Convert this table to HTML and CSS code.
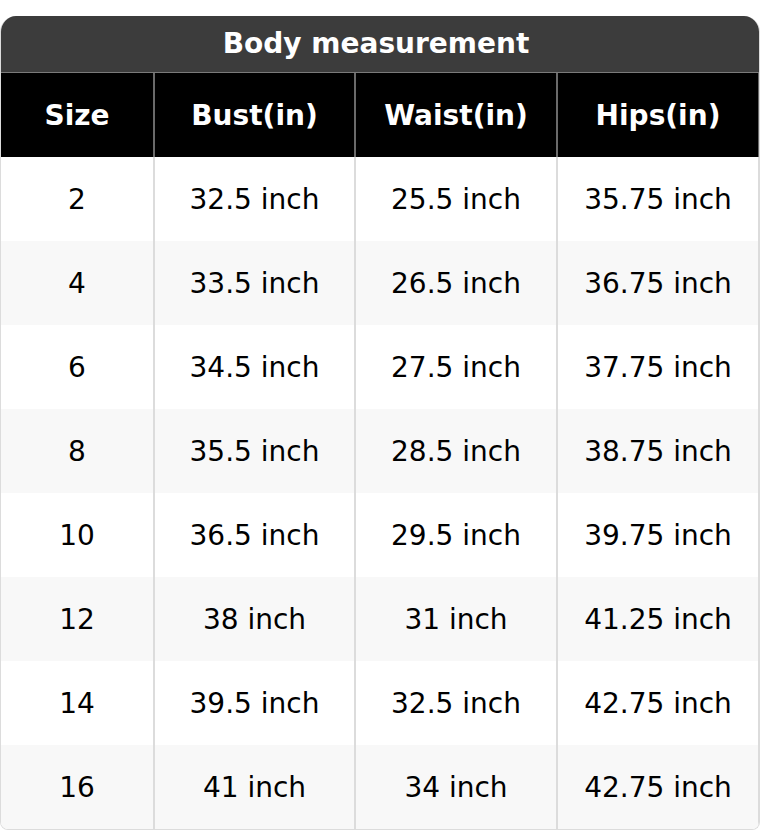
FILE: index.html
```html
<!DOCTYPE html>
<html>
<head>
<meta charset="utf-8">
<link rel="stylesheet" href="styles.css">
</head>
<body>
<div class="card">
  <div class="title">Body measurement</div>
  <table class="chart">
    <colgroup>
      <col class="c1"><col class="c2"><col class="c3"><col class="c4">
    </colgroup>
    <thead>
      <tr><th>Size</th><th>Bust(in)</th><th>Waist(in)</th><th>Hips(in)</th></tr>
    </thead>
    <tbody>
      <tr><td>2</td><td>32.5 inch</td><td>25.5 inch</td><td>35.75 inch</td></tr>
      <tr><td>4</td><td>33.5 inch</td><td>26.5 inch</td><td>36.75 inch</td></tr>
      <tr><td>6</td><td>34.5 inch</td><td>27.5 inch</td><td>37.75 inch</td></tr>
      <tr><td>8</td><td>35.5 inch</td><td>28.5 inch</td><td>38.75 inch</td></tr>
      <tr><td>10</td><td>36.5 inch</td><td>29.5 inch</td><td>39.75 inch</td></tr>
      <tr><td>12</td><td>38 inch</td><td>31 inch</td><td>41.25 inch</td></tr>
      <tr><td>14</td><td>39.5 inch</td><td>32.5 inch</td><td>42.75 inch</td></tr>
      <tr><td>16</td><td>41 inch</td><td>34 inch</td><td>42.75 inch</td></tr>
    </tbody>
  </table>
</div>
</body>
</html>
```
FILE: styles.css
```css
html, body {
  margin: 0;
  padding: 0;
  background: #ffffff;
}
body {
  padding-top: 16px;
  font-family: "DejaVu Sans", "Liberation Sans", sans-serif;
  font-size: 28px;
  color: #000;
}
.card {
  width: 760px;
  box-sizing: border-box;
  border: 1px solid #dcdcdc;
  border-top: none;
  border-radius: 16px 16px 8px 8px;
  overflow: hidden;
  background: #fff;
}
.title {
  height: 56px;
  background: #3c3c3c;
  color: #fff;
  font-weight: bold;
  text-align: center;
  line-height: 56px;
  border-bottom: 1px solid #7a7a7a;
  margin: 0 -1px;
  padding-right: 8px;
}
.chart {
  width: 758px;
  table-layout: fixed;
  border-collapse: separate;
  border-spacing: 0;
}
.c1 { width: 154px; }
.c2 { width: 201px; }
.c3 { width: 202px; }
.c4 { width: 201px; }
.chart th,
.chart td {
  padding: 0;
  text-align: center;
  border-right: 2px solid #dcdcdc;
}
.chart th:last-child,
.chart td:last-child {
  border-right: 1px solid #dcdcdc;
}
.chart th {
  height: 84px;
  background: #000;
  color: #fff;
  font-weight: bold;
  border-right-color: #6a6a6a;
}
.chart th:last-child {
  border-right-color: #6a6a6a;
}
.chart td {
  height: 84px;
  font-weight: normal;
}
.chart tbody tr:nth-child(even) td {
  background: #f8f8f8;
}
```
